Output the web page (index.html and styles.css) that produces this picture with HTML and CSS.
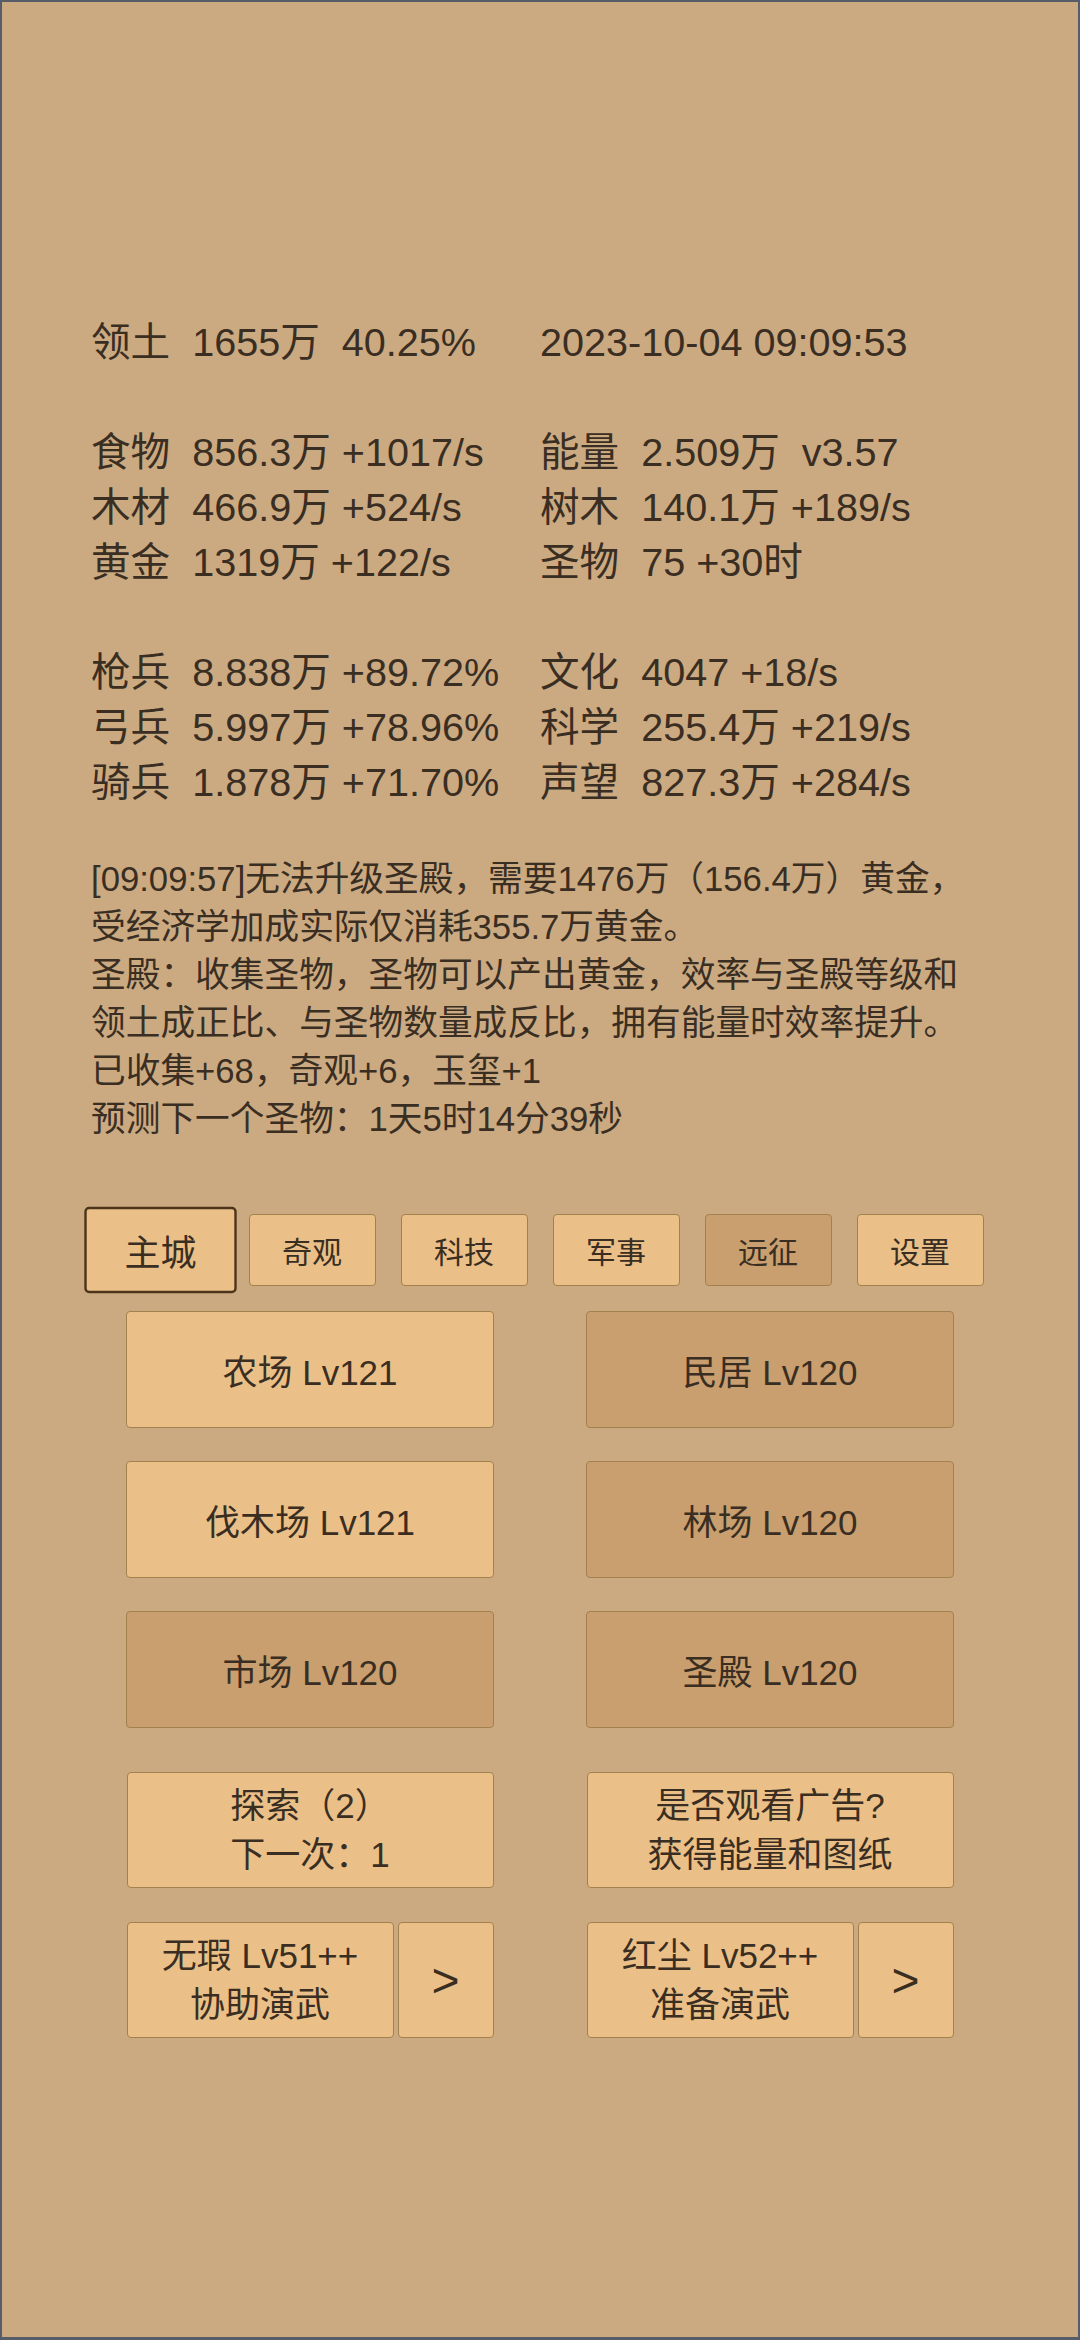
FILE: index.html
```html
<!DOCTYPE html>
<html lang="zh-CN">
<head>
<meta charset="utf-8">
<title>领土</title>
<link rel="stylesheet" href="styles.css">
</head>
<body>
<div class="page">
  <div class="stats">
    <div class="cell">领土  1655万  40.25%</div><div class="cell">2023-10-04 09:09:53</div>
    <div class="blank"></div>
    <div class="cell">食物  856.3万 +1017/s</div><div class="cell">能量  2.509万  v3.57</div>
    <div class="cell">木材  466.9万 +524/s</div><div class="cell">树木  140.1万 +189/s</div>
    <div class="cell">黄金  1319万 +122/s</div><div class="cell">圣物  75 +30时</div>
    <div class="blank"></div>
    <div class="cell">枪兵  8.838万 +89.72%</div><div class="cell">文化  4047 +18/s</div>
    <div class="cell">弓兵  5.997万 +78.96%</div><div class="cell">科学  255.4万 +219/s</div>
    <div class="cell">骑兵  1.878万 +71.70%</div><div class="cell">声望  827.3万 +284/s</div>
  </div>

  <div class="log">
    <div class="line">[09:09:57]无法升级圣殿，需要1476万（156.4万）黄金，</div>
    <div class="line">受经济学加成实际仅消耗355.7万黄金。</div>
    <div class="line">圣殿：收集圣物，圣物可以产出黄金，效率与圣殿等级和</div>
    <div class="line">领土成正比、与圣物数量成反比，拥有能量时效率提升。</div>
    <div class="line">已收集+68，奇观+6，玉玺+1</div>
    <div class="line">预测下一个圣物：1天5时14分39秒</div>
  </div>

  <div class="tabs">
    <div class="tab tab-active">主城</div>
    <div class="tab">奇观</div>
    <div class="tab">科技</div>
    <div class="tab">军事</div>
    <div class="tab tab-dark">远征</div>
    <div class="tab">设置</div>
  </div>

  <div class="buildings">
    <div class="btn">农场 Lv121</div>
    <div class="btn btn-dark">民居 Lv120</div>
    <div class="btn">伐木场 Lv121</div>
    <div class="btn btn-dark">林场 Lv120</div>
    <div class="btn btn-dark">市场 Lv120</div>
    <div class="btn btn-dark">圣殿 Lv120</div>
  </div>

  <div class="actions">
    <div class="btn two">探索（2）<br>下一次：1</div>
    <div class="btn two">是否观看广告?<br>获得能量和图纸</div>
    <div class="pair">
      <div class="btn two main">无瑕 Lv51++<br>协助演武</div>
      <div class="btn arrow">&gt;</div>
    </div>
    <div class="pair">
      <div class="btn two main">红尘 Lv52++<br>准备演武</div>
      <div class="btn arrow">&gt;</div>
    </div>
  </div>
</div>
</body>
</html>
```

FILE: styles.css
```css
* { box-sizing: border-box; }

html, body {
  margin: 0;
  padding: 0;
  background: #cbaa82;
}

.page {
  width: 1080px;
  height: 2340px;
  border: 2px solid #565c68;
  border-bottom-width: 3px;
  background: #cbaa82;
  color: #3a2e22;
  font-family: "Liberation Sans", "Noto Sans CJK SC", sans-serif;
  padding-top: 313px;
}

.stats {
  display: grid;
  grid-template-columns: 449px auto;
  grid-auto-rows: 55px;
  padding-left: 89px;
  font-size: 39.6px;
  line-height: 55px;
}

.cell {
  white-space: pre;
}

.blank {
  grid-column: 1 / span 2;
}

.log {
  margin-top: 45px;
  padding-left: 89px;
  font-size: 34.7px;
  line-height: 48px;
}

.line {
  white-space: nowrap;
}

.tabs {
  margin-top: 71px;
  display: flex;
  justify-content: center;
  gap: 25px;
}

.tab {
  width: 127px;
  height: 72px;
  display: flex;
  align-items: center;
  justify-content: center;
  background: #ebc088;
  border: 1.5px solid #a3814f;
  border-radius: 4px;
  font-size: 30px;
}

.tab-dark {
  background: #c99f6f;
}

.tab-active {
  transform: scale(1.2);
  border: 2px solid #4b3419;
  position: relative;
  z-index: 1;
}

.buildings {
  margin-top: 25px;
  display: grid;
  grid-template-columns: 368px 368px;
  grid-auto-rows: 117px;
  column-gap: 92px;
  row-gap: 33px;
  justify-content: center;
}

.btn {
  display: flex;
  align-items: center;
  justify-content: center;
  text-align: center;
  background: #ebc088;
  border: 1.5px solid #a3814f;
  border-radius: 4px;
  font-size: 35px;
}

.btn-dark {
  background: #c99f6f;
}

.actions {
  margin-top: 44px;
  display: grid;
  grid-template-columns: 367px 367px;
  grid-auto-rows: 116px;
  column-gap: 93px;
  row-gap: 34px;
  justify-content: center;
}

.two {
  line-height: 49px;
}

.pair {
  display: flex;
  gap: 4px;
}

.pair .main {
  width: 267px;
}

.pair .arrow {
  flex: 1;
  font-size: 48px;
}
```
